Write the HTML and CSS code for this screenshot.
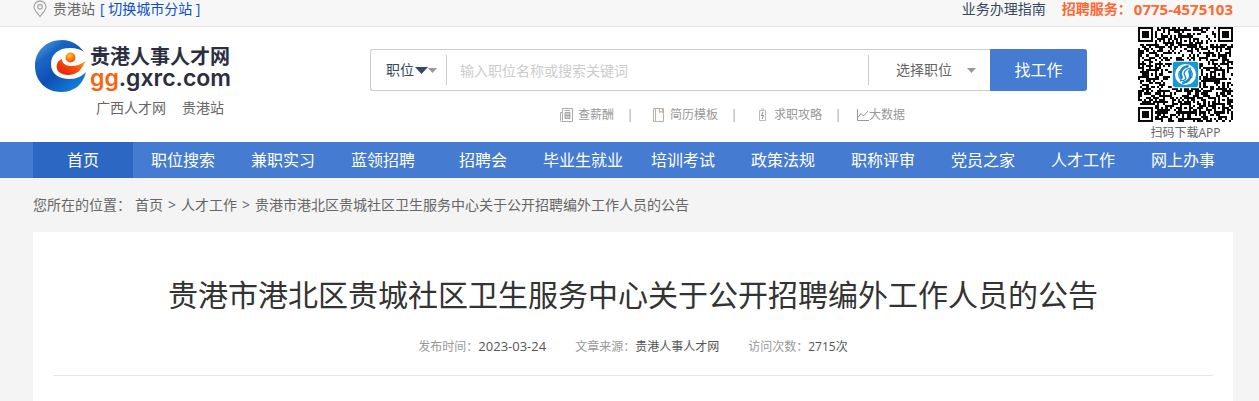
FILE: index.html
```html
<!DOCTYPE html>
<html lang="zh-CN">
<head>
<meta charset="utf-8">
<title>贵港人事人才网</title>
<link rel="stylesheet" href="styles.css">
</head>
<body>
<div class="topbar">
  <div class="wrap topbar-row">
    <svg class="pin" viewBox="0 0 14 18" fill="none" stroke="#aaa" stroke-width="1.3"><path d="M7 16.5C4 13 1 10 1 7a6 6 0 0 1 12 0c0 3-3 6-6 9.500z"/><circle cx="7" cy="6.800" r="2.300"/></svg>
    <span>贵港站</span>
    <a class="switch" href="#">[ 切换城市分站 ]</a>
    <a class="guide" href="#">业务办理指南</a>
    <strong class="hotline">招聘服务：<span class="phone">0775-4575103</span></strong>
  </div>
</div>

<header class="wrap header">
  <div class="brand">
    <a class="logo" href="#">
      <svg class="logo-mark" viewBox="0 0 54 56">
        <defs>
          <linearGradient id="ball" x1="0" y1="0" x2=".8" y2="1"><stop offset="0" stop-color="#5cb0ee"/><stop offset=".3" stop-color="#1a66c4"/><stop offset=".6" stop-color="#0d50b4"/><stop offset="1" stop-color="#1583dc"/></linearGradient>
          <linearGradient id="flame" x1="0" y1=".8" x2="1" y2="0"><stop offset="0" stop-color="#ea1c0a"/><stop offset=".5" stop-color="#f4500c"/><stop offset="1" stop-color="#ffae1c"/></linearGradient>
          <radialGradient id="head" cx=".4" cy=".3" r=".75"><stop offset="0" stop-color="#ffc52a"/><stop offset="1" stop-color="#f4430d"/></radialGradient>
        </defs>
        <path fill="url(#ball)" d="M50 13C45 6 38 1 28 1 12 1 1 12 1 27s11 26 26 26c13 0 22-7 25-20-4 4-9 7-16 7-11 0-19-5-19-15 0-10 8-16 19-16 6 0 10 1 14 4z"/>
        <circle cx="36.500" cy="18.500" r="5" fill="url(#head)"/>
        <path fill="url(#flame)" d="M28 20c-6 2-7 9-3 13 5 4 13 4 19 0 4-3 5-7 8-11-5 3-9 5-15 5-6 0-9-3-9-7z"/>
      </svg>
      <span class="logo-text"><span class="logo-name">贵港人事人才网</span><span class="logo-domain"><span class="accent">gg</span>.gxrc.com</span></span>
    </a>
    <div class="sites"><a href="#">广西人才网</a><a href="#">贵港站</a></div>
  </div>

  <div class="finder">
    <form class="search">
      <label class="kind">
        <select class="kind-select" aria-label="搜索类型"><option>职位</option></select>
        <svg class="kind-arrows" viewBox="0 0 22 8"><path fill="#34495e" d="M0 1h13L6.500 8z"/><path fill="#999" d="M13 2h9l-4.500 5z"/></svg>
      </label>
      <input class="keyword" type="text" aria-label="关键词" placeholder="输入职位名称或搜索关键词">
      <button class="category" type="button">选择职位<svg class="caret" viewBox="0 0 9 5"><path fill="#999" d="M0 0h9L4.500 5z"/></svg></button>
      <button class="submit" type="submit">找工作</button>
    </form>
    <nav class="quick" aria-label="快捷工具">
      <a href="#"><svg class="tool" viewBox="0 0 13 14" fill="none" stroke="#aaa"><path d="M2.500.5h10v13h-11a1 1 0 0 1-1-1V4.500h2zM2.500 4v8.500"/><path fill="#ccc" d="M5 4.500h5v6H5z"/><path d="M4.500 2.500h6M5 7.500h5"/></svg>查薪酬</a>
      <span class="bar">|</span>
      <a href="#"><svg class="tool" viewBox="0 0 13 14" fill="none" stroke="#b8b2a8"><path d="M1.500.5h10v13h-10zM3.500.5v13M7.500.5v4l1.500-1 1.500 1v-4"/></svg>简历模板</a>
      <span class="bar">|</span>
      <a href="#"><svg class="tool" viewBox="-2 0 13 14" fill="none" stroke="#bbb"><path d="M1.500 2.500h6v10h-6zM3 1h3"/><path d="M5 4L3.500 7.500h2L4 11" stroke="#888"/></svg>求职攻略</a>
      <span class="bar">|</span>
      <a class="tight" href="#"><svg class="tool" viewBox="0 0 13 14" fill="none" stroke="#999"><path d="M1.500 1v11.500H13M2 9.500l3-4 2.500 2.500L12 3"/></svg>大数据</a>
    </nav>
  </div>

  <div class="app">
    <svg class="qr" viewBox="0 0 45 45" shape-rendering="crispEdges" role="img" aria-label="APP 二维码">
      <path id="modules" fill="#0a0a0a"/>
      <g shape-rendering="auto">
        <rect x="16" y="16" width="13" height="13" fill="#fff"/>
        <rect x="16.500" y="16.500" width="12" height="12" rx="1" fill="#1698d5"/>
        <circle cx="22.500" cy="22.500" r="5" fill="#fff"/>
        <g fill="none" stroke="#168bc9" stroke-linecap="round"><path stroke-width="1.200" d="M23.500 18.600c-3 .6-4 3-2.800 5.400M21.500 26.400c3-.6 4-3 2.800-5.400"/><path stroke-width=".6" d="M25 19.500c-2.500.2-3.800 2-2.800 3.500s.2 2.500-2.200 2.500M19.600 21c-.5 1.500-.2 3 .8 4M25.400 24c.5-1.500.2-3-.8-4"/></g>
      </g>
    </svg>
    <span>扫码下载APP</span>
  </div>
</header>

<nav class="mainnav" aria-label="主导航">
  <div class="wrap mainnav-row">
    <a class="current" href="#">首页</a><a href="#">职位搜索</a><a href="#">兼职实习</a><a href="#">蓝领招聘</a><a href="#">招聘会</a><a href="#">毕业生就业</a><a href="#">培训考试</a><a href="#">政策法规</a><a href="#">职称评审</a><a href="#">党员之家</a><a href="#">人才工作</a><a href="#">网上办事</a>
  </div>
</nav>

<main class="wrap main">
  <div class="crumbs"><span class="where">您所在的位置：</span><a href="#">首页</a><span>&gt;</span><a href="#">人才工作</a><span>&gt;</span><span>贵港市港北区贵城社区卫生服务中心关于公开招聘编外工作人员的公告</span></div>
  <article class="article">
    <h1>贵港市港北区贵城社区卫生服务中心关于公开招聘编外工作人员的公告</h1>
    <div class="meta">
      <span>发布时间：<b class="num">2023-03-24</b></span>
      <span>文章来源：<b>贵港人事人才网</b></span>
      <span>访问次数：<b>2715次</b></span>
    </div>
  </article>
</main>
<script src="qr.js"></script>
</body>
</html>
```
FILE: styles.css
```css
* { box-sizing: border-box; }
body {
  margin: 0;
  background: #f4f4f4;
  color: #666;
  font: 14px/20px "Open Sans", "Noto Sans CJK SC", sans-serif;
}
a { color: inherit; text-decoration: none; }
button, input, select { font: inherit; color: inherit; border: 0; background: none; padding: 0; margin: 0; }
svg { display: block; flex: none; }
.wrap { padding: 0 26px 0 33px; }

.topbar { background: #f7f7f7; border-bottom: 1px solid #e5e5e5; }
.topbar-row { display: flex; height: 26px; padding-bottom: 8px; align-items: center; }
.pin { width: 14px; height: 18px; margin-right: 6px; }
.switch { color: #0a50c8; margin-left: 5px; }
.guide { color: #34495e; margin-left: auto; margin-right: 16px; }
.hotline { color: #ff6833; display: flex; gap: 2px; }
.phone { font-size: 15px; }

.header { display: flex; background: #fff; height: 115px; }
.brand { width: 337px; padding-top: 12px; }
.logo { display: flex; height: 56px; }
.logo-mark { width: 54px; height: 56px; margin-left: 1px; }
.logo-text { display: flex; flex-direction: column; padding: 7px 0 0 2px; color: #2b2e3f; }
.logo-name { font-size: 20px; font-weight: 700; line-height: 22px; }
.logo-domain { font: 600 23px/20px Inter, sans-serif; }
.accent { color: #f8630c; }
.sites { display: flex; gap: 16px; padding: 3px 0 0 63px; }

.finder { flex: 1; max-width: 717px; padding-top: 22px; }
.search { display: flex; height: 42px; border: 1px solid #ccc; border-right: 0; border-radius: 3px; align-items: center; }
.kind { display: flex; align-items: center; width: 76px; height: 30px; padding-left: 15px; border-right: 1px solid #ccc; color: #34495e; }
.kind-select { appearance: none; width: 29px; }
.kind-arrows { width: 22px; height: 8px; }
.keyword { flex: 1; min-width: 0; height: 30px; padding-left: 13px; outline: 0; }
.keyword::placeholder { color: #ccc; opacity: 1; }
.category { display: flex; align-items: center; justify-content: space-between; width: 122px; height: 30px; padding: 0 14px 0 27px; border-left: 1px solid #ccc; }
.caret { width: 9px; height: 5px; }
.submit { width: 97px; height: 42px; margin: -1px 0; background: #457bd0; color: #fff; font-size: 16px; border-radius: 0 3px 3px 0; }
.quick { display: flex; justify-content: center; align-items: center; padding: 14px 0 0 8px; font-size: 12px; color: #999; }
.quick a { display: flex; align-items: center; gap: 5px; }
.quick .tight { gap: 0; margin-left: -4px; }
.tool { width: 13px; height: 14px; }
.bar { width: 38px; padding-right: 6px; text-align: center; }

.app { margin-left: auto; display: flex; flex-direction: column; align-items: center; font-size: 12px; line-height: 22px; }
.qr { width: 95px; height: 95px; }

.mainnav { background: #457bd0; color: #fff; font-size: 16px; }
.mainnav-row { display: flex; }
.mainnav a { flex: 1; line-height: 36px; text-align: center; white-space: nowrap; }
.mainnav .current { background: #2c67c4; }

.crumbs { display: flex; gap: 5px; height: 54px; line-height: 54px; }
.where { margin-right: -1px; }
.article { background: #fff; padding: 38px 20px 40px; }
h1 { margin: 0; color: #333; font-size: 30px; font-weight: 400; line-height: 50px; text-align: center; }
.meta { display: flex; justify-content: center; align-items: center; gap: 29px; padding: 17px 0 18px; border-bottom: 1px solid #e5e5e5; font-size: 12px; color: #999; }
.meta b { color: #555; font-weight: 400; }
.meta .num { font-size: 13px; line-height: 1; }
```
FILE: qr.js
```js
const size = 45;
let seed = 20230;
const random = () => (seed = (seed * 1103515245 + 12345) % 2147483648) / 2147483648;

// Concentric square: ring, gap, solid core.
function ring(x, y, cx, cy, radius) {
  const d = Math.max(Math.abs(x - cx), Math.abs(y - cy));
  if (d > radius) return null;
  return radius === 2 ? d !== 1 : d === 3 || d < 2;
}

function dark(x, y, fill) {
  for (const [cx, cy] of [[3, 3], [41, 3], [3, 41]]) {
    const d = Math.max(Math.abs(x - cx), Math.abs(y - cy));
    if (d === 4) return false;
    const hit = ring(x, y, cx, cy, 3);
    if (hit !== null) return hit;
  }
  for (const [cx, cy] of [[22, 6], [6, 22], [38, 22], [22, 38], [38, 38]]) {
    const hit = ring(x, y, cx, cy, 2);
    if (hit !== null) return hit;
  }
  if (x === 6) return y % 2 === 0;
  if (y === 6) return x % 2 === 0;
  return fill;
}

let d = "";
for (let y = 0; y < size; y++) {
  for (let x = 0; x < size; x++) {
    if (dark(x, y, random() < 0.52)) d += `M${x} ${y}h1v1h-1z`;
  }
}
document.getElementById("modules").setAttribute("d", d);
```
